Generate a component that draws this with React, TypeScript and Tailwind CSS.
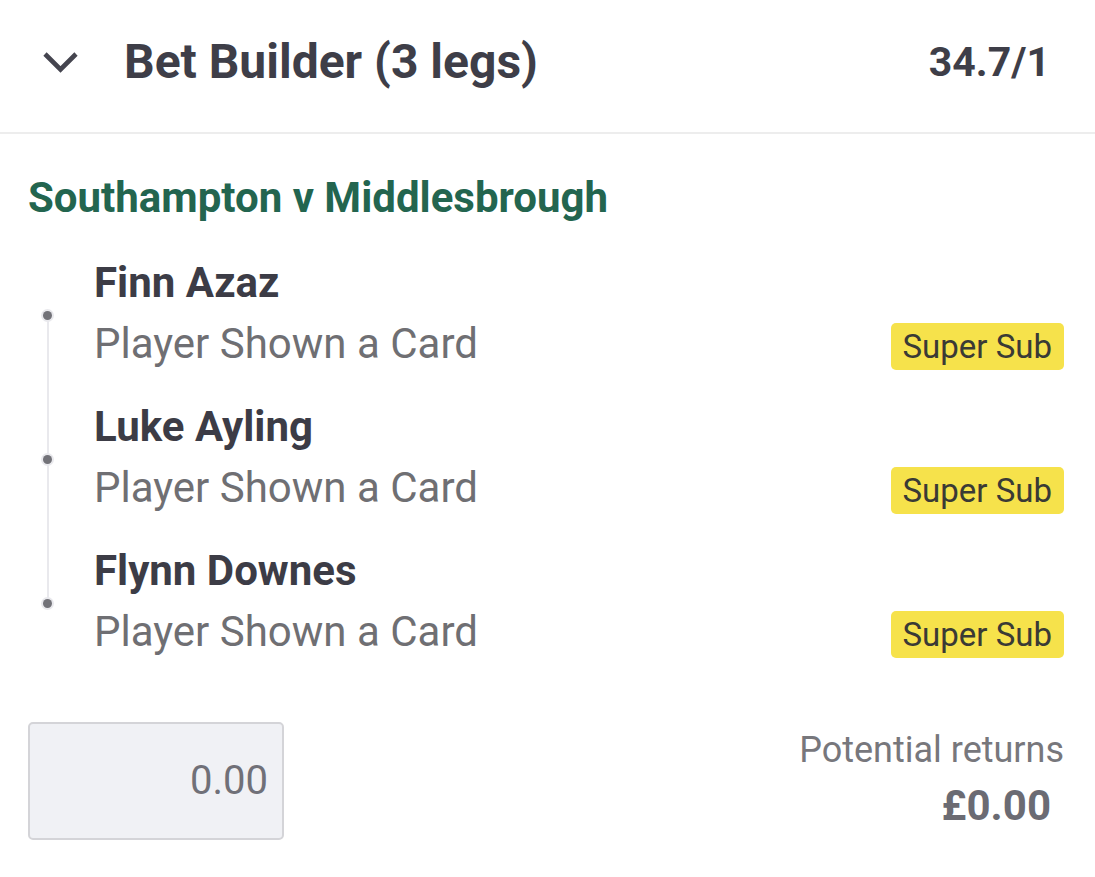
const legs = [
  { name: "Finn Azaz", market: "Player Shown a Card" },
  { name: "Luke Ayling", market: "Player Shown a Card" },
  { name: "Flynn Downes", market: "Player Shown a Card" },
];

function Leg({ name, market, last }: { name: string; market: string; last: boolean }) {
  return (
    <div className="relative pl-[66px]">
      {!last && <div className="absolute left-[19px] top-[57px] h-[144px] w-[2px] bg-[#e9e9ed]" />}
      <div className="absolute left-[15px] top-[53px] h-[9px] w-[9px] rounded-full bg-[#727278] ring-2 ring-[#e9e9ed]" />
      <div className="text-[42px] leading-[50px] font-bold text-[#3c3c46]">{name}</div>
      <div className="mt-[9px] flex items-center justify-between">
        <span className="text-[42px] leading-[50px] text-[#6f6f73]">{market}</span>
        <span className="mt-[6px] rounded-[5px] bg-[#f6e24b] px-[12px] text-[33px] leading-[47px] text-[#3a3a35]">
          Super Sub
        </span>
      </div>
    </div>
  );
}

export default function App() {
  return (
    <div className="h-[877px] w-[1095px] bg-white font-['Roboto',sans-serif]">
      <div className="flex h-[134px] items-center justify-between border-b-2 border-[#ededed] pb-[8px] pr-[45px]">
        <div className="flex items-center">
          <svg className="ml-[43px] mr-[46px]" width="35" height="22" viewBox="0 0 35 22">
            <polyline points="2,3 17.5,18.5 33,3" fill="none" stroke="#45454f" strokeWidth="4.6" />
          </svg>
          <h1 className="text-[48px] leading-[58px] font-bold text-[#3e3e48]">Bet Builder (3 legs)</h1>
        </div>
        <span className="text-[41px] leading-[48px] font-bold text-[#3e3e48]">34.7/1</span>
      </div>

      <div className="pl-[28px] pr-[31px]">
        <h2 className="mt-[40px] text-[42px] leading-[48px] font-bold text-[#23654f]">
          Southampton v Middlesbrough
        </h2>
        <div className="mt-[36px] flex flex-col gap-[32px]">
          {legs.map((leg, i) => (
            <Leg key={leg.name} name={leg.name} market={leg.market} last={i === legs.length - 1} />
          ))}
        </div>

        <div className="mt-[64px] flex items-start justify-between">
          <div className="flex h-[118px] w-[256px] items-center justify-end rounded-[5px] border-2 border-[#d4d4d8] bg-[#f0f1f5] pr-[14px]">
            <span className="text-[40px] leading-[48px] text-[#707078]">0.00</span>
          </div>
          <div className="mt-[7px] flex flex-col items-end">
            <span className="text-[36px] leading-[42px] text-[#77777c]">Potential returns</span>
            <span className="mr-[13px] mt-[10px] text-[42px] leading-[50px] font-bold text-[#6b6b73]">£0.00</span>
          </div>
        </div>
      </div>
    </div>
  );
}
